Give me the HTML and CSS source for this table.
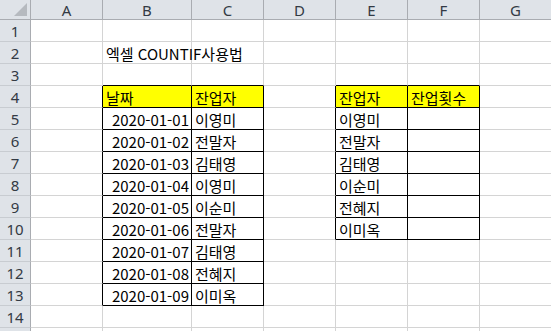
FILE: index.html
```html
<!DOCTYPE html>
<html lang="ko">
<head>
<meta charset="utf-8">
<title>엑셀 COUNTIF사용법</title>
<link rel="stylesheet" href="styles.css">
</head>
<body>
<div class="sheet">
  <!-- column headers -->
  <div class="corner"><span class="tri"></span></div>
  <div class="ch">A</div><div class="ch">B</div><div class="ch">C</div><div class="ch">D</div><div class="ch">E</div><div class="ch">F</div><div class="ch">G</div>

  <div class="rh">1</div><div class="c"></div><div class="c"></div><div class="c"></div><div class="c"></div><div class="c"></div><div class="c"></div><div class="c"></div>

  <div class="rh">2</div><div class="c"></div><div class="c title">엑셀 COUNTIF사용법</div><div class="c"></div><div class="c"></div><div class="c"></div><div class="c"></div><div class="c"></div>

  <div class="rh">3</div><div class="c"></div><div class="c bb"></div><div class="c bb"></div><div class="c"></div><div class="c bb"></div><div class="c bb"></div><div class="c"></div>

  <div class="rh">4</div><div class="c br"></div><div class="c box hd">날짜</div><div class="c box hd">잔업자</div><div class="c br"></div><div class="c box hd">잔업자</div><div class="c box hd">잔업횟수</div><div class="c"></div>

  <div class="rh">5</div><div class="c br"></div><div class="c box num">2020-01-01</div><div class="c box">이영미</div><div class="c br"></div><div class="c box">이영미</div><div class="c box"></div><div class="c"></div>

  <div class="rh">6</div><div class="c br"></div><div class="c box num">2020-01-02</div><div class="c box">전말자</div><div class="c br"></div><div class="c box">전말자</div><div class="c box"></div><div class="c"></div>

  <div class="rh">7</div><div class="c br"></div><div class="c box num">2020-01-03</div><div class="c box">김태영</div><div class="c br"></div><div class="c box">김태영</div><div class="c box"></div><div class="c"></div>

  <div class="rh">8</div><div class="c br"></div><div class="c box num">2020-01-04</div><div class="c box">이영미</div><div class="c br"></div><div class="c box">이순미</div><div class="c box"></div><div class="c"></div>

  <div class="rh">9</div><div class="c br"></div><div class="c box num">2020-01-05</div><div class="c box">이순미</div><div class="c br"></div><div class="c box">전혜지</div><div class="c box"></div><div class="c"></div>

  <div class="rh">10</div><div class="c br"></div><div class="c box num">2020-01-06</div><div class="c box">전말자</div><div class="c br"></div><div class="c box">이미옥</div><div class="c box"></div><div class="c"></div>

  <div class="rh">11</div><div class="c br"></div><div class="c box num">2020-01-07</div><div class="c box">김태영</div><div class="c"></div><div class="c"></div><div class="c"></div><div class="c"></div>

  <div class="rh">12</div><div class="c br"></div><div class="c box num">2020-01-08</div><div class="c box">전혜지</div><div class="c"></div><div class="c"></div><div class="c"></div><div class="c"></div>

  <div class="rh">13</div><div class="c br"></div><div class="c box num">2020-01-09</div><div class="c box">이미옥</div><div class="c"></div><div class="c"></div><div class="c"></div><div class="c"></div>

  <div class="rh">14</div><div class="c"></div><div class="c"></div><div class="c"></div><div class="c"></div><div class="c"></div><div class="c"></div><div class="c"></div>

  <div class="rh"></div><div class="c"></div><div class="c"></div><div class="c"></div><div class="c"></div><div class="c"></div><div class="c"></div><div class="c"></div>
</div>
</body>
</html>
```

FILE: styles.css
```css
html, body {
  margin: 0;
  padding: 0;
  background: #ffffff;
  overflow: hidden;
}

.sheet {
  display: grid;
  grid-template-columns: 31px 72px 89px 72px 72px 72px 72px 72px;
  grid-template-rows: 20px repeat(15, 22px);
  width: 552px;
  font-family: "Noto Sans CJK KR", "Noto Sans", sans-serif;
  font-size: 15px;
  color: #000;
}

.sheet > div {
  box-sizing: border-box;
  border-right: 1px solid #d4d4d4;
  border-bottom: 1px solid #d4d4d4;
  white-space: nowrap;
  overflow: visible;
  display: flex;
  align-items: center;
  line-height: 1;
}

/* header strip */
.corner {
  background: #dfe3e8;
  position: relative;
}
.sheet > .corner {
  border-right: 1px solid #a9acb1;
  border-bottom: 1px solid #a9acb1;
}
.tri {
  position: absolute;
  right: 3px;
  bottom: 3px;
  width: 0;
  height: 0;
  border-left: 13px solid transparent;
  border-bottom: 13px solid #b6babf;
}

.sheet > .ch {
  background: #dfe3e8;
  border-right: 1px solid #a9acb1;
  border-bottom: 1px solid #a9acb1;
  justify-content: center;
  font-family: "Noto Sans", sans-serif;
  font-size: 15px;
  color: #333a44;
  padding-top: 1px;
}

.sheet > .rh {
  background: #dfe3e8;
  border-right: 1px solid #a9acb1;
  border-bottom: 1px solid #c8ccd1;
  justify-content: center;
  font-family: "Noto Sans", sans-serif;
  font-size: 15px;
  color: #333a44;
  padding-top: 2px;
}

/* cells */
.c {
  padding: 2px 3px 0 3px;
}

.title {
  overflow: visible;
  padding-left: 3px;
}

.num {
  justify-content: flex-end;
  padding-right: 2px;
  padding-left: 0;
}

.sheet > .box {
  border-right-color: #000;
  border-bottom-color: #000;
}
.sheet > .br {
  border-right-color: #000;
}
.sheet > .bb {
  border-bottom-color: #000;
}

.hd {
  background: #ffff00;
}
```
